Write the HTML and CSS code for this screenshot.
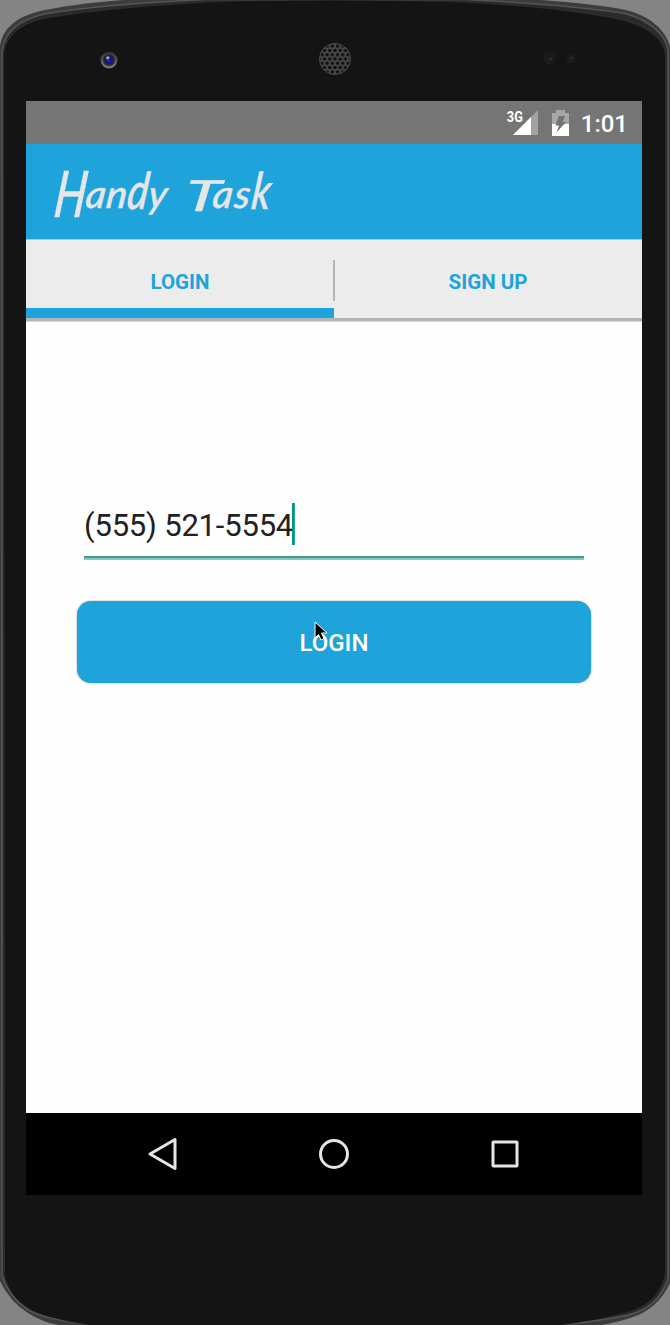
FILE: index.html
```html
<!DOCTYPE html>
<html lang="en">
<head>
<meta charset="utf-8">
<title>Handy Task</title>
<link rel="stylesheet" href="styles.css">
</head>
<body>
<div class="phone">
  <svg class="shell" viewBox="0 0 670 1325" aria-hidden="true">
    <defs>
      <pattern id="mesh" width="5.2" height="8.6" patternUnits="userSpaceOnUse" x="332.4" y="54.7">
        <rect width="5.2" height="8.6" fill="#484848"/>
        <g fill="#0d0d0d"><circle cx="2.6" cy="4.3" r="1.75"/><circle cx="0" cy="0" r="1.75"/><circle cx="5.2" cy="0" r="1.75"/><circle cx="0" cy="8.6" r="1.75"/><circle cx="5.2" cy="8.6" r="1.75"/></g>
      </pattern>
      <linearGradient id="ring" x2="0" y2="1"><stop stop-color="#292929"/><stop offset="1" stop-color="#858585"/></linearGradient>
    </defs>
    <path class="rim" d="M0 46C3 26 20 15 45 10C82 3 115 0 160-2H510C560 1 595 4 626 10C650 16 666 30 670 47V1283C661 1302 648 1312 633 1317Q620 1322 595 1326H65Q45 1324 28 1313Q10 1302 0 1281Z"/>
    <path class="rim-line" d="M2 52C4 31 20 19 47 13.500C80 8 130 3 205-.5H465C535 3 590 8 625 13.500C650 20 665 35 668 50V1279C660 1300 648 1310 628 1315Q605 1320 570 1324H90Q48 1320 30 1311Q9 1298 2 1275Z"/>
    <path class="face" d="M4 56C5 37 20 24 44 19C90 11 145 6 220 2Q335-1 450 2C530 6 575 11 620 20C650 27 664 41 665 56V1272C662 1292 650 1304 633 1310Q610 1318 555 1326H95Q50 1319 34 1311Q9 1298 5 1275Z"/>
    <circle cx="109" cy="60" r="8.5" fill="url(#ring)"/>
    <circle cx="109" cy="60" r="6" fill="#242424" stroke="#444"/>
    <circle cx="109" cy="60" r="3.8" fill="#16168a"/><circle cx="107.8" cy="57.8" r="1.6" fill="#a7a7c8"/><circle cx="108.5" cy="60.6" r="1.2" fill="#2525e0"/>
    <circle cx="335" cy="59" r="15.5" fill="url(#mesh)" stroke="#484848"/>
    <circle cx="549.5" cy="58" r="6.5" fill="#1a1a1a"/><circle cx="550.5" cy="59" r="1.3" fill="#343434"/>
    <circle cx="571.5" cy="58" r="5" fill="#1a1a1a"/><circle cx="571.5" cy="58" r="1.2" fill="#303030"/>
  </svg>
  <main class="screen">
    <div class="status">
      <span class="network">3G</span>
      <svg class="signal" width="25" height="25" viewBox="0 0 25 25"><path d="M0 25L25 0V25Z" fill="#a2a2a2"/><path d="M0 25L18 7V25Z" fill="#fff"/></svg>
      <svg class="battery" width="17" height="26" viewBox="0 0 17 26"><path d="M0 3H4V0H13V3H17V14H0Z" fill="#a7a7a7"/><path d="M0 14H17V26H0Z" fill="#fff"/><path d="M7 6H13L10.500 12H14L4.500 22.500L7 15.500H3.500Z" fill="#737373"/></svg>
      <span class="clock">1:01</span>
    </div>
    <header class="appbar"><h1 class="brand"><span class="cap-h">H</span><span class="word-rest">an<span class="tall">d</span>y</span> <span class="cap-t">T</span><span class="ask">as<span class="tall">k</span></span></h1></header>
    <nav class="tabs">
      <a class="tab active">LOGIN</a>
      <i class="divider"></i>
      <a class="tab">SIGN UP</a>
    </nav>
    <form class="content">
      <div class="field"><span class="phone-number">(555) 521-5554</span><i class="caret"></i></div>
      <button class="login" type="button">LOGIN
        <svg class="cursor" width="14" height="20" viewBox="0 0 14 20"><path d="M1 1V17L4.500 13.500L7 19L10 17.500L7.500 12H13Z" fill="#000" stroke="#fff" stroke-width="1"/></svg>
      </button>
    </form>
    <nav class="navbar">
      <svg width="32" height="34" viewBox="0 0 32 34"><path d="M3 17L28 2.500V31.500Z"/></svg>
      <svg width="32" height="34" viewBox="0 0 32 34"><circle cx="16" cy="17" r="13.5"/></svg>
      <svg width="32" height="34" viewBox="0 0 32 34"><rect x="4" y="5" width="24" height="24" rx=".5"/></svg>
    </nav>
  </main>
</div>
</body>
</html>
```
FILE: styles.css
```css
* { box-sizing: border-box; }
body { margin: 0; background: #848484; font-family: Roboto, "Liberation Sans", sans-serif; }
.phone { position: relative; width: 670px; height: 1325px; padding: 101px 28px 130px 26px; overflow: hidden; }
.shell { position: absolute; inset: 0; width: 670px; height: 1325px; }
.rim { fill: #3c3c3c; }
.rim-line { fill: #2b2b2b; stroke: #555; stroke-width: 1.5; }
.face { fill: #141414; }
.screen { position: relative; display: flex; flex-direction: column; height: 1094px; background: #fefefe; }
.status { display: flex; height: 43px; padding: 9px 14px 0 0; justify-content: flex-end; align-items: flex-start; background: #757575; color: #fff; }
.network { margin: -1px -10px 0 0; font-size: 15px; line-height: 16px; font-weight: 700; transform: scaleX(.85); transform-origin: right; }
.signal { margin-right: 14px; }
.battery { margin: 0 12px 0 0; }
.clock { font-size: 24px; line-height: 28px; font-weight: 500; }
.appbar { height: 96px; padding: 5px 0 0 30px; background: #1ea3db; border-bottom: 1px solid #9bcfe6; }
.brand { display: flex; align-items: baseline; margin: 0; width: max-content; color: #e6e6e8; font: italic 500 39px/70px Lato, sans-serif; -webkit-text-stroke: .4px #e6e6e8; transform: skewX(-7deg); }
.cap-h { width: 31px; font-size: 64px; transform: scaleX(.7) translateY(9px); transform-origin: left; }
.word-rest { width: 84px; margin-right: 15px; letter-spacing: .3px; }
.tall { display: inline-block; transform: scaleY(1.3); transform-origin: 50% 67%; }
.cap-t { width: 28px; font-size: 43px; transform: scaleX(1.5) translateY(3px); transform-origin: left; }
.ask { letter-spacing: 1.5px; }
.tabs { display: flex; height: 81px; background: #ececec; border-bottom: 3px solid #b5b5b5; box-shadow: 0 1px #d8d8d8; }
.tab { flex: 1; display: flex; align-items: center; justify-content: center; padding-top: 5px; border-bottom: 0 solid #1ea3db; color: #1ea3db; font-size: 20.5px; font-weight: 700; }
.tab.active { padding-top: 15px; border-bottom-width: 10px; }
.divider { width: 2px; height: 41px; margin: 20px -1px 0; background: #b5b5b5; }
.content { flex: 1; display: flex; flex-direction: column; padding: 182px 51px 0; }
.field { display: flex; height: 57px; margin: 0 7px; background: linear-gradient(#43988c, #43988c) 0 53px / 100% 2px no-repeat, linear-gradient(#83cbc2, #83cbc2) 0 55px / 100% 2px no-repeat; }
.phone-number { padding-top: 1px; font-size: 31px; line-height: 44px; letter-spacing: -.2px; color: #212121; white-space: nowrap; }
.caret { width: 3px; height: 42px; margin-left: -1px; background: linear-gradient(90deg, #009688 70%, #55b9ae); }
.login { position: relative; height: 82px; margin-top: 41px; padding: 2px 0 0; border: 0; border-radius: 14px; background: #1ea3db; box-shadow: 0 0 2px #9a9a9a; color: #fff; font: 500 24px Roboto, sans-serif; }
.cursor { position: absolute; left: 237px; top: 20px; }
.navbar { display: flex; justify-content: space-between; align-items: center; height: 82px; padding: 0 121px; background: #000; }
.navbar svg { fill: none; stroke: #e5e5e5; stroke-width: 3; stroke-linejoin: round; }
```
